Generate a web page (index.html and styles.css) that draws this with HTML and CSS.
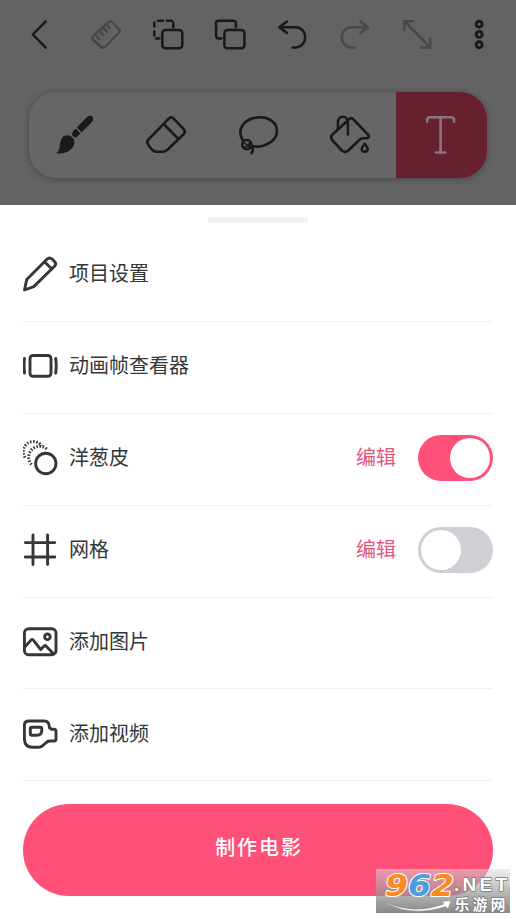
FILE: index.html
```html
<!DOCTYPE html>
<html lang="zh-CN">
<head>
<meta charset="utf-8">
<title>项目菜单</title>
<link rel="stylesheet" href="styles.css">
</head>
<body>
<div class="screen">
  <header class="backdrop">
    <nav class="topbar">
      <svg viewBox="23 14 40 40"><path d="M45.700 21.300L32.800 34.500L45.700 47.700"/></svg>
      <svg class="faded" viewBox="85 14 40 40"><path d="M109 21.800Q110.500 20.700 112 22L119 29.300Q120.400 31 119 32.500L104.800 47Q103 48.600 101.200 47L92.800 39.500Q91.500 38 92.800 36.400ZM96 35.500l3.200 3.700M100 31.500l3 3.500M103.500 28l3.500 3.700M107 25l2.500 3"/></svg>
      <svg viewBox="147 14 40 40"><rect x="162.300" y="30" width="20" height="18.200" rx="3"/><path d="M158 20.700h5M167 20.700h5M173.300 22.500v5M154.300 22.500v4M154.300 31.500v4M156 38.500h3.500"/></svg>
      <svg viewBox="209 14 40 40"><rect x="224.400" y="30" width="20" height="18.200" rx="3"/><path d="M221.500 38.500h-3q-2.400 0-2.400-2.400V23.200q0-2.400 2.400-2.400h15q2.400 0 2.400 2.400v4"/></svg>
      <svg viewBox="271 14 40 40"><path d="M287 21.500L279.300 27.200L287 33M279.500 27.200H295.500A9.700 10.100 0 0 1 295.500 47.400H292.500"/></svg>
      <svg class="faded" viewBox="333 14 40 40"><path d="M360.500 21.500L368 27.200L360.500 33M368 27.200H351.500A9.700 10.100 0 0 0 351.500 47.400H354.500"/></svg>
      <svg class="faded" viewBox="395 14 40 40"><path d="M412.500 21.300h-8.200v8.500M404.600 21.500L430 47.200M421 47.500h9.200v-9"/></svg>
      <svg class="more" viewBox="457 14 40 40"><circle cx="479.200" cy="24.200" r="3"/><circle cx="479.200" cy="34.400" r="3"/><circle cx="479.200" cy="44.700" r="3"/></svg>
    </nav>
    <nav class="tools">
      <svg viewBox="29 92 92 86"><path class="solid" d="M86.500 117.500Q90 114 92.600 117Q94.500 119.500 91 123L81.400 132.500L76.800 127.500ZM75.800 128.600L80.300 133.500L76.300 137.400Q73 137.500 71.900 134.200Q73 130.500 75.800 128.600ZM63.500 136.300Q70 133 73.800 139.500Q76.500 146.500 67.500 151.800Q62 154.500 56.300 153Q60.500 149.500 58.500 149.500Q60.500 147.500 59.500 146.500Q60.500 139 63.500 136.300Z"/></svg>
      <svg viewBox="121 92 92 86"><path d="M168.800 118.600Q171.200 116.200 173.600 118.600L183.600 129Q186 131.600 183.600 134.200L167.500 149.700Q165.500 151.800 162.500 151.800H156.500Q154 151.800 152 149.700L148.300 145Q146 142 148.400 139.500ZM164.200 124.500L178.300 138.800"/></svg>
      <svg viewBox="213 92 92 86"><path d="M243 140.500C236 130 244 119 256.500 117.500C268 116 277 122 277 131C277 141 264 149 250 145.800M250.800 144.500Q254.300 149 251.500 153.300"/><circle cx="246.800" cy="144.600" r="4.600"/><path class="knot" d="M243.500 147.500Q249 147 249.500 142.500M244.500 143l4 3.500"/></svg>
      <svg viewBox="305 92 91 86"><path d="M349.300 119Q351.200 117.200 353 119L368.300 134.800Q370 137.800 366.500 138.200H363Q361 138.200 359.500 139.800L348.300 150.500Q345 153.200 341.800 150.500L332.200 140Q330 137.200 332.200 134.700ZM337.900 128.500V122.500C338 114.800 347.700 114.800 347.900 122.500V134.500M364.800 143.800Q361.500 148.200 361.700 149.300Q362.200 151.700 364.800 151.700Q367.400 151.500 367.700 149.300Q367.800 148 364.800 143.800Z"/></svg>
      <svg class="active" viewBox="396 92 91 86"><path d="M427.200 121.700V119.700Q427.200 117.200 429.700 117.200H451.500Q454 117.200 454 119.700V121.700M440.600 117.200V152.300M436 152.500H445.200"/></svg>
    </nav>
  </header>

  <main class="sheet">
    <div class="handle"></div>
    <ul class="menu">
      <li>
        <svg viewBox="0 0 36 36"><path d="M1.500 34L3.700 23.600L24.200 3Q26.500 .8 29.100 3L31.700 5.700Q33.700 8 31.500 10.300L10.800 30.600ZM21.700 6L28.900 13"/></svg>
        <span class="label">项目设置</span>
      </li>
      <li>
        <svg viewBox="0 0 36 36"><rect x="7" y="7.500" width="21" height="20.800" rx="3"/><path d="M1.500 10.500Q.7 18 1.500 25M32.700 10.500Q33.700 18 32.700 25"/></svg>
        <span class="label">动画帧查看器</span>
      </li>
      <li>
        <svg viewBox="0 0 36 36"><circle cx="22.800" cy="23.500" r="10.200"/><path class="dots" d="M2 17.500A9.800 9.800 0 1 1 18.700 6M8.500 24.500A10 10 0 0 1 24.500 9.900"/></svg>
        <span class="label">洋葱皮</span>
        <span class="edit">编辑</span>
        <span class="switch on"></span>
      </li>
      <li>
        <svg viewBox="0 0 36 36"><path d="M10 3V32.600M24.600 3V32.600M2.300 10.600H31.800M2.300 25H31.800"/></svg>
        <span class="label">网格</span>
        <span class="edit">编辑</span>
        <span class="switch"></span>
      </li>
      <li>
        <svg viewBox="0 0 36 36"><rect x="1.400" y="4.800" width="31.600" height="26" rx="4.300"/><circle cx="24.400" cy="12.800" r="2.800"/><path d="M2 22.800L8 16.100Q9.300 14.800 10.500 16.300L17.700 25.500L21.200 22Q22.200 21.100 23.200 22.200L30.500 29.800"/></svg>
        <span class="label">添加图片</span>
      </li>
      <li>
        <svg viewBox="0 0 36 36"><path d="M5.700 5H21.200Q26.300 5 26.500 11.800L28.500 13.200H31Q33 13.200 33 15.500V22.700Q33 25 31 25H27Q24.500 25 22.700 27L19.700 29.600Q18 31.200 15.700 31.200H9.500Q1.400 31.200 1.400 22.500V9.200Q1.400 5 5.700 5ZM8.500 11.200H17Q18.800 11.200 18.800 13V14.200Q18.800 19.200 13.800 19.200H8.700Q7.300 19.200 7.300 17.800V12.600Q7.300 11.200 8.500 11.200Z"/></svg>
        <span class="label">添加视频</span>
      </li>
    </ul>
    <button class="make">制作电影</button>
  </main>

  <div class="watermark">
    <svg viewBox="0 0 134 44">
      <g class="digits">
        <text x="9" y="27" textLength="23" lengthAdjust="spacingAndGlyphs" class="orange">9</text>
        <text x="32" y="27" textLength="23" lengthAdjust="spacingAndGlyphs" class="blue">6</text>
        <text x="55" y="27" textLength="23" lengthAdjust="spacingAndGlyphs" class="orange">2</text>
      </g>
      <path class="swoosh" d="M7 32Q37 47 68 35L66 32.500L75 31.500L72 40L70 37.500Q33 49 7 32Z"/>
      <text class="net" x="78" y="22" textLength="53" lengthAdjust="spacing">.NET</text>
      <text class="site" x="78.500" y="40.500" textLength="51">乐游网</text>
    </svg>
  </div>
</div>
</body>
</html>
```
FILE: styles.css
```css
* { box-sizing: border-box; }
body {
  margin: 0;
  background: #fff;
  font-family: "Noto Sans CJK SC", sans-serif;
  color: #34373a;
}
.screen { position: relative; width: 516px; height: 919px; overflow: hidden; }
svg {
  display: block;
  fill: none;
  stroke: currentColor;
  stroke-width: 2.6;
  stroke-linecap: round;
  stroke-linejoin: round;
}

.backdrop {
  height: 205px;
  padding-top: 14px;
  background: #636365;
  color: #19191b;
}
.topbar {
  display: grid;
  grid-template-columns: repeat(8, 62px);
  justify-items: center;
  padding-left: 12px;
}
.topbar svg { width: 40px; height: 40px; stroke-width: 2.5; }
.topbar .more { stroke-width: 2.9; }
.topbar .faded { color: #48484a; }

.tools {
  display: grid;
  grid-template-columns: 92px 92px 92px 91px 91px;
  width: 458px;
  height: 86px;
  margin: 38px 0 0 29px;
  overflow: hidden;
  border-radius: 27px;
  background: #666;
  box-shadow: 0 1px 6px rgba(0, 0, 0, .3);
}
.tools svg { width: 100%; height: 86px; }
.tools .solid { fill: currentColor; stroke: none; }
.tools .knot { stroke-width: 1.6; }
.tools .active { background: #662030; color: #8b767b; }

.sheet {
  display: flex;
  flex-direction: column;
  height: 714px;
  padding: 12px 23px 0;
  background: #fff;
}
.handle {
  align-self: center;
  width: 100px;
  height: 6px;
  border-radius: 2px;
  background: #f2f2f4;
}
.menu { list-style: none; margin: 7px 0 0; padding: 0; }
.menu li {
  display: flex;
  align-items: center;
  height: 91.900px;
  border-bottom: 1.500px solid #f0f0f1;
}
.menu svg { flex: none; width: 36px; height: 36px; margin-top: -2px; stroke-width: 2.900; }
.menu .dots { stroke-width: 3; stroke-linecap: butt; stroke-dasharray: 1.500 1.600; }
.label, .edit { margin-top: -4px; font-size: 20px; line-height: 30px; }
.label { flex: 1; margin-left: 10px; }
.edit { margin-right: 22px; color: #e4557d; }
.switch {
  display: flex;
  width: 75px;
  height: 46px;
  margin-top: -2px;
  padding: 3px;
  border-radius: 23px;
  background: #cfcfd6;
}
.switch::before {
  content: "";
  width: 40px;
  height: 40px;
  border-radius: 50%;
  background: #fff;
}
.switch.on { justify-content: flex-end; background: #ff5079; }

.make {
  height: 92px;
  margin-top: 23px;
  padding: 0 0 6px 2px;
  border: 0;
  border-radius: 46px;
  background: #ff5077;
  color: #fff;
  font: 500 20px/30px "Noto Sans CJK SC", sans-serif;
  letter-spacing: 1.900px;
}

.watermark {
  position: absolute;
  left: 376px;
  top: 869px;
  width: 134px;
  height: 44px;
  background: linear-gradient(rgba(225, 225, 225, .5), rgba(115, 115, 115, .85));
}
.watermark svg { width: 134px; height: 44px; }
.watermark text { paint-order: stroke; font-weight: 700; }
.digits text {
  font-family: "DejaVu Sans", sans-serif;
  font-size: 31px;
  font-style: italic;
  stroke: #fff;
  stroke-width: 2;
}
.digits .orange { fill: #fa8b22; }
.digits .blue { fill: #4a9fe0; }
.watermark .net {
  font-family: "Liberation Sans", sans-serif;
  font-size: 19px;
  fill: #fff;
  stroke: #777;
  stroke-width: 1.500;
}
.watermark .site { font-size: 15px; fill: #fff; stroke: #777; stroke-width: 1.500; }
.swoosh { fill: #fff; stroke: #888; stroke-width: .5; }
```
